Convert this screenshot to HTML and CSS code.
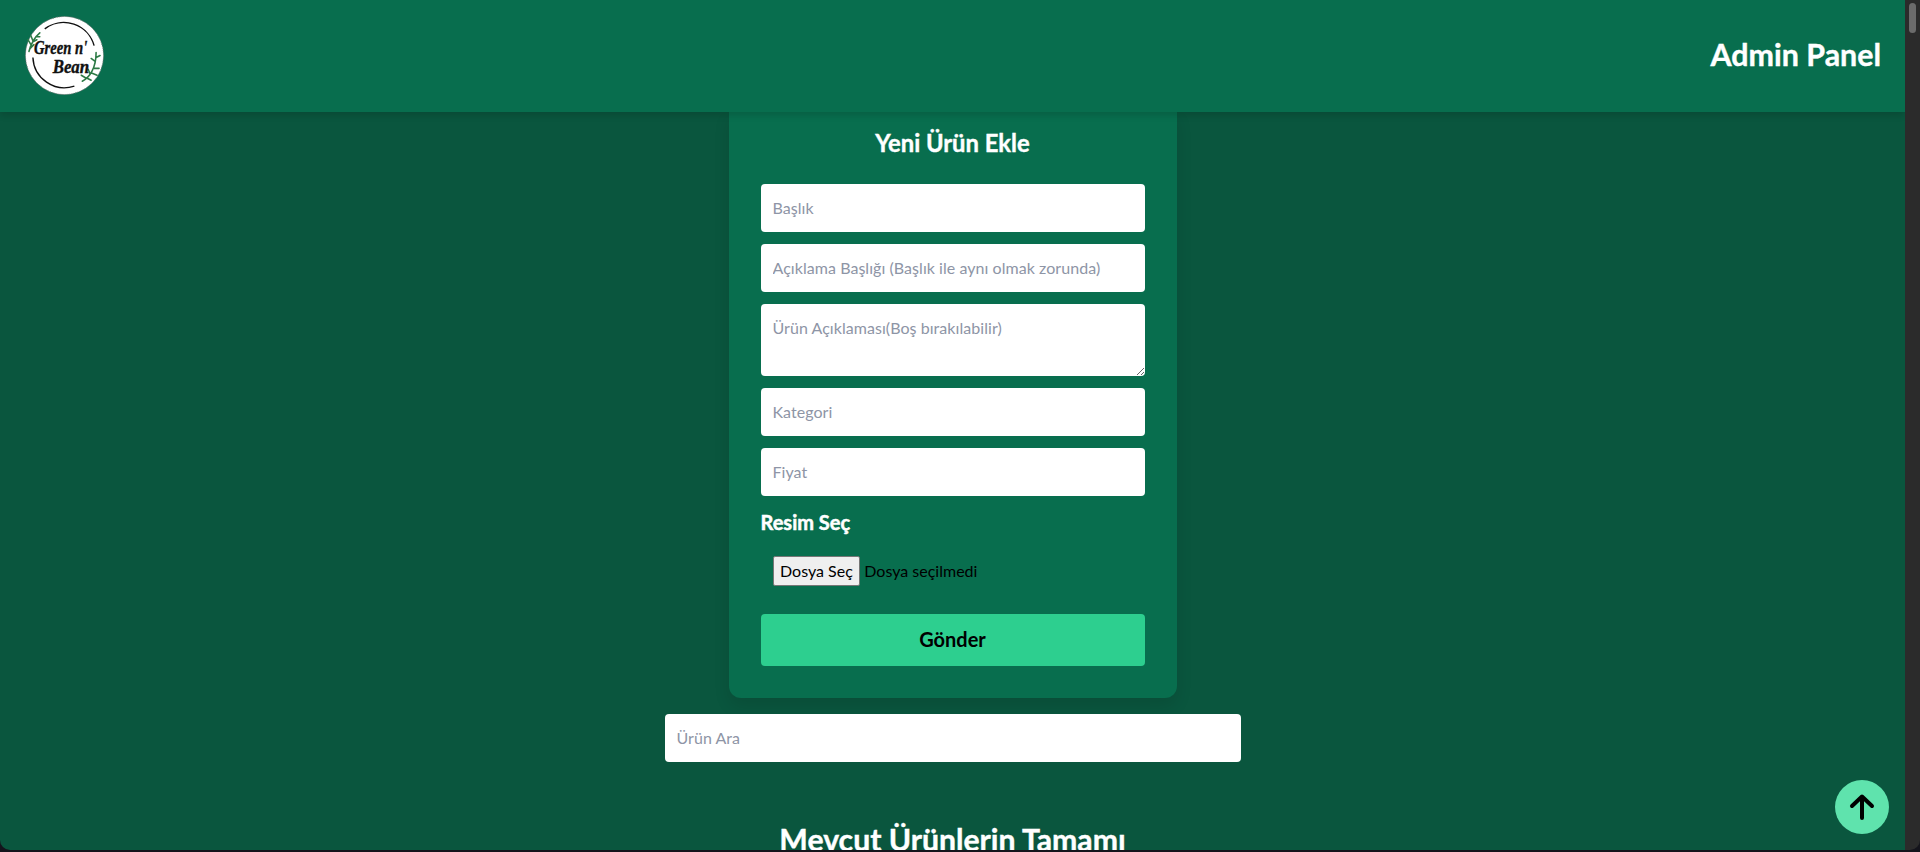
FILE: index.html
```html
<!DOCTYPE html>
<html lang="tr">
<head>
<meta charset="utf-8">
<title>Admin Panel</title>
<link rel="stylesheet" href="styles.css">
</head>
<body>
<div class="window">
  <div class="page">
    <header class="topbar">
      <svg class="logo" viewBox="0 0 80 80" aria-label="Green n' Bean">
        <circle cx="40" cy="40" r="39.5" fill="#fff" stroke="#777" stroke-width="1" stroke-dasharray="1 1"/>
        <path d="M20 13A32 32 0 0 1 70 30" class="ring"/>
        <path d="M8 42A32 32 0 0 0 50 71" class="ring"/>
        <path d="M4 36C6 28 9 22 15 17M6 29 3 24M8 25 6 20M5 33 9 29M8 26 12 24M11 21 15 21" class="leaf"/>
        <path d="M58 66C66 62 72 52 72 37M62 63 57 60M66 59 64 54M63 63 67 65M68 58 73 60M70 53 75 53M71 46 67 43M72 42 76 40" class="leaf"/>
        <text x="9" y="38" textLength="54" lengthAdjust="spacingAndGlyphs" class="script">Green n'</text>
        <text x="28" y="58" textLength="37" lengthAdjust="spacingAndGlyphs" class="script">Bean</text>
      </svg>
      <h1 class="brand">Admin Panel</h1>
    </header>
    <main class="content">
      <form class="card">
        <h2 class="card-title">Yeni Ürün Ekle</h2>
        <input class="field" type="text" placeholder="Başlık">
        <input class="field" type="text" placeholder="Açıklama Başlığı (Başlık ile aynı olmak zorunda)">
        <textarea class="field area" placeholder="Ürün Açıklaması(Boş bırakılabilir)"></textarea>
        <input class="field" type="text" placeholder="Kategori">
        <input class="field" type="text" placeholder="Fiyat">
        <div class="pick-label">Resim Seç</div>
        <div class="file-row"><button class="file-btn" type="button">Dosya Seç</button><span class="file-name">Dosya seçilmedi</span></div>
        <button class="submit" type="button">Gönder</button>
      </form>
      <input class="field search" type="text" placeholder="Ürün Ara">
      <h2 class="section-title">Mevcut Ürünlerin Tamamı</h2>
    </main>
    <button class="to-top" type="button" aria-label="Yukarı">
      <svg viewBox="0 0 28 28" width="28" height="28"><path d="M14 25V4M4 13 14 3.500 24 13" fill="none" stroke="#000" stroke-width="4" stroke-linecap="round" stroke-linejoin="round"/></svg>
    </button>
  </div>
  <div class="scrollbar"><div class="thumb"></div></div>
</div>
</body>
</html>
```
FILE: styles.css
```css
* { box-sizing: border-box; }
html, body { margin: 0; height: 100%; overflow: hidden; background: #14141c; }
body { font-family: Lato, "Noto Sans", sans-serif; }
.window { display: flex; height: 850px; border-radius: 0 0 10px 10px; overflow: hidden; }
.page { position: relative; flex: 1; min-width: 0; overflow: hidden; background: #0a563e; }
.topbar {
  position: relative; z-index: 2; height: 112px; display: flex; align-items: center; justify-content: space-between;
  padding: 0 24px 0 25px; background: #086e4e; box-shadow: 0 4px 6px rgba(0,0,0,.12);
}
.logo { width: 79px; height: 79px; margin-top: -1px; display: block; }
.ring { fill: none; stroke: #111; stroke-width: 1.4; }
.leaf { fill: none; stroke: #2c7a45; stroke-width: 1.6; stroke-linecap: round; }
.script { font: italic 700 19px "Liberation Serif", serif; fill: #111; stroke: #111; stroke-width: .4; }
.brand { margin: 0; padding-bottom: 4px; font-size: 30.4px; line-height: 36px; font-weight: 700; color: #fff; -webkit-text-stroke: .4px #fff; }
.content { display: flex; flex-direction: column; align-items: center; }
.card {
  width: 448px; display: flex; flex-direction: column; padding: 17px 32px 32px; background: #086e4e;
  border-radius: 0 0 12px 12px; box-shadow: 0 8px 16px rgba(0,0,0,.1);
}
.card-title { margin: 0 0 27px; text-align: center; font-size: 23.8px; line-height: 28px; font-weight: 700; color: #fff; -webkit-text-stroke: .4px #fff; }
.field {
  display: block; width: 100%; height: 48px; margin-bottom: 12px; padding: 0 12px 2px; border: 0; border-radius: 4px; background: #fff;
  font: 16px/24px Lato, "Noto Sans", sans-serif; letter-spacing: .05px; color: #111; outline: 0;
}
.field::placeholder { color: #8e95a6; opacity: 1; }
.area { height: 72px; padding-top: 12px; }
.pick-label { margin-top: 2px; font-size: 20px; line-height: 24px; font-weight: 700; color: #fff; -webkit-text-stroke: .5px #fff; }
.file-row { display: flex; align-items: center; margin: 22px 0 28px 12px; height: 30px; }
.file-btn {
  height: 30px; padding: 0 6.5px 1px; background: #efefef; border: 1px solid #767676; border-radius: 2px; color: #000;
  font: 16px Lato, "Noto Sans", sans-serif;
}
.file-name { margin-left: 4px; padding-bottom: 1px; font-size: 16px; color: #000; }
.submit {
  height: 52px; padding: 0 0 2px; border: 0; border-radius: 4px; background: #2dcf8f; color: #000;
  font: 700 20px Lato, "Noto Sans", sans-serif;
}
.search { width: 576px; margin: 16px 0 0; }
.section-title { margin: 59px 0 0; font-size: 30.2px; line-height: 36px; font-weight: 700; color: #fff; -webkit-text-stroke: .4px #fff; }
.to-top {
  position: absolute; right: 16px; bottom: 16px; z-index: 3; width: 54px; height: 54px; padding: 0; border: 0; border-radius: 50%;
  background: #5fe3ad; display: flex; align-items: center; justify-content: center;
}
.scrollbar { width: 15px; background: #2b2b2b; padding: 3px 4px; }
.thumb { width: 7px; height: 30px; border-radius: 4px; background: #6b6b6b; }
```
